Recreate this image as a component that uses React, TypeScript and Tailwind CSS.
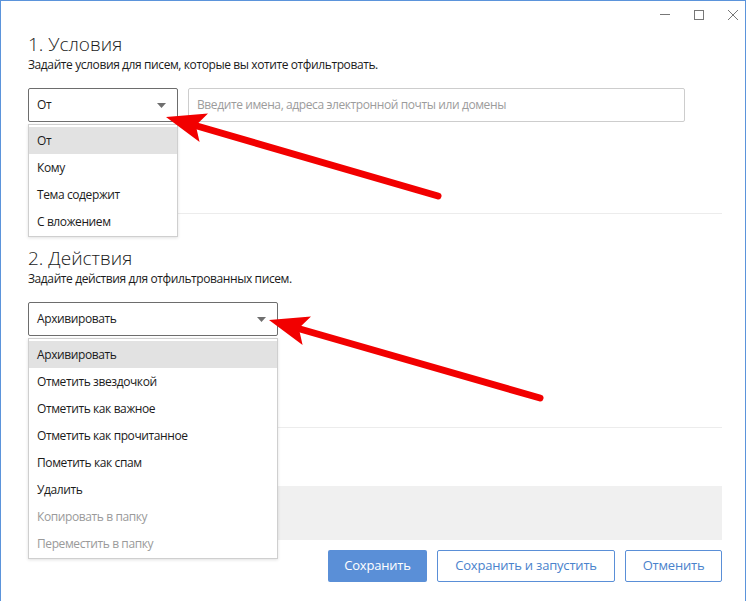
import { FC, ReactElement } from "react";

type TItem = { label: string; disabled?: boolean };

const conditionItems: TItem[] = [
  { label: "От" },
  { label: "Кому" },
  { label: "Тема содержит" },
  { label: "С вложением" },
];

const actionItems: TItem[] = [
  { label: "Архивировать" },
  { label: "Отметить звездочкой" },
  { label: "Отметить как важное" },
  { label: "Отметить как прочитанное" },
  { label: "Пометить как спам" },
  { label: "Удалить" },
  { label: "Копировать в папку", disabled: true },
  { label: "Переместить в папку", disabled: true },
];

const Caret: FC = (): ReactElement => (
  <svg width="9" height="5" viewBox="0 0 9 5" className="shrink-0">
    <path d="M0 0h9L4.5 5z" fill="#6f6f6f" />
  </svg>
);

const Select: FC<{ value: string; items: TItem[]; width: string }> = ({
  value,
  items,
  width,
}): ReactElement => (
  <div className={`relative ${width}`}>
    <div className="flex h-[34px] items-center justify-between rounded-[2px] border border-[#6d6d6d] bg-white pl-[8px] pr-[11px] text-[12px] tracking-[-0.4px] text-[#1b1b1b]">
      <span>{value}</span>
      <Caret />
    </div>
    {/* open menu */}
    <div className="absolute left-0 top-[calc(100%+2px)] z-10 w-full border border-[#cfcfcf] bg-white pb-[1px] pt-[2px] shadow-[0_1px_3px_rgba(0,0,0,0.12)]">
      {items.map((item, index) => (
        <div
          key={item.label}
          className={`flex h-[27px] items-center px-[8px] text-[12px] tracking-[-0.4px] ${
            index === 0 ? "bg-[#e2e2e2]" : ""
          } ${item.disabled ? "text-[#9a9a9a]" : "text-[#1b1b1b]"}`}
        >
          {item.label}
        </div>
      ))}
    </div>
  </div>
);

const Arrows: FC = (): ReactElement => (
  <svg
    width="750"
    height="601"
    viewBox="0 0 750 601"
    className="pointer-events-none absolute left-0 top-0 z-20"
  >
    <line x1="197" y1="126" x2="438" y2="196" stroke="#f20000" strokeWidth="7" strokeLinecap="round" />
    <polygon points="166,117 208,113.5 195.8,125.4 199.6,142" fill="#f20000" />
    <line x1="300" y1="329" x2="540" y2="398" stroke="#f20000" strokeWidth="7" strokeLinecap="round" />
    <polygon points="269,320 311,316.5 298.8,328.3 302.6,345" fill="#f20000" />
  </svg>
);

export default function App(): ReactElement {
  return (
    <main className="relative h-[601px] w-[750px] overflow-hidden bg-white font-['Open_Sans','Noto_Sans',sans-serif]">
      <div className="flex h-[601px] w-[746px] flex-col border-l border-r border-t border-[#5b94db] bg-white">
        {/* Window controls */}
        <div className="flex h-[27px] items-center justify-end gap-[24px] pr-[7px] text-[#777]">
          <div className="h-px w-[10px] bg-[#777]" />
          <div className="h-[10px] w-[10px] border border-[#777]" />
          <svg width="10" height="10" viewBox="0 0 10 10">
            <path d="M0 0L10 10M10 0L0 10" stroke="#777" strokeWidth="1" />
          </svg>
        </div>

        <div className="flex flex-col pl-[27px] pr-[23px]">
          {/* 1. Conditions */}
          <h1 className="mt-[4px] text-[19px] font-light leading-[24px] text-[#1b1b1b]">
            1. Условия
          </h1>
          <p className="mt-[1px] text-[12px] leading-[16px] tracking-[-0.4px] text-[#1b1b1b]">
            Задайте условия для писем, которые вы хотите отфильтровать.
          </p>
          <div className="mt-[15px] flex gap-[10px]">
            <Select value="От" items={conditionItems} width="w-[150px]" />
            <div className="flex h-[34px] w-[497px] items-center rounded-[2px] border border-[#cdcdcd] px-[8px] text-[12px] tracking-[-0.4px] text-[#9c9c9c]">
              Введите имена, адреса электронной почты или домены
            </div>
          </div>

          <div className="mt-[91px] h-px w-full bg-[#ececec]" />

          {/* 2. Actions */}
          <h2 className="mt-[32px] text-[19px] font-light leading-[24px] text-[#1b1b1b]">
            2. Действия
          </h2>
          <p className="mt-[1px] text-[12px] leading-[16px] tracking-[-0.4px] text-[#1b1b1b]">
            Задайте действия для отфильтрованных писем.
          </p>
          <div className="mt-[15px] flex">
            <Select value="Архивировать" items={actionItems} width="w-[250px]" />
          </div>

          <div className="mt-[91px] h-px w-full bg-[#ececec]" />

          <div className="mt-[58px] h-[54px] w-full bg-[#f0f0f0]" />

          {/* Footer buttons */}
          <div className="mt-[10px] flex justify-end gap-[10px]">
            <button className="h-[32px] w-[99px] rounded-[2px] bg-[#5a8fd7] text-[13px] tracking-[-0.2px] text-white">
              Сохранить
            </button>
            <button className="h-[32px] w-[178px] rounded-[2px] border border-[#5a8fd7] bg-white text-[13px] tracking-[-0.2px] text-[#4a82cc]">
              Сохранить и запустить
            </button>
            <button className="h-[32px] w-[97px] rounded-[2px] border border-[#5a8fd7] bg-white text-[13px] tracking-[-0.2px] text-[#4a82cc]">
              Отменить
            </button>
          </div>
        </div>
      </div>

      <Arrows />
    </main>
  );
}
